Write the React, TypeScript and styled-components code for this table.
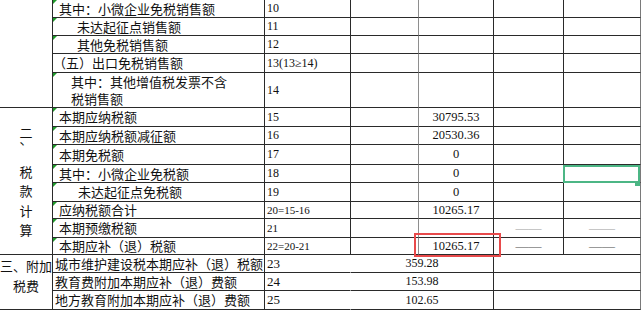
import React from "react";
import styled, { createGlobalStyle, css } from "styled-components";

const GlobalStyle = createGlobalStyle`
  html, body { margin: 0; padding: 0; background: #ffffff; }
  body {
    font-family: "Noto Sans CJK SC", "Noto Sans", sans-serif;
    color: #111111;
  }
`;

const INK = "#2a2a2a";

type Tone = "line" | "soft" | "edge" | "open";

const toneColor = (t?: Tone) =>
  t === "soft" ? "#8e8e8e" : t === "edge" ? "#7a7a7a" : t === "open" ? "transparent" : INK;

const Sheet = styled.div`
  display: grid;
  grid-template-columns: 53px 212px 86px 68px 75px 70px 77px;
  grid-template-rows: 18px 18px 18px 19px 35px 19px 18px 20px 18px 19px 17px 19px 17px 18px 18px 19px;
  width: 641px;
`;

const Cell = styled.div<{ $tone?: Tone; $span?: number }>`
  box-sizing: border-box;
  position: relative;
  display: flex;
  align-items: center;
  min-width: 0;
  border-bottom: 1px solid ${INK};
  border-right: 1px solid ${(p) => toneColor(p.$tone)};
  ${(p) =>
    p.$span &&
    css`
      grid-column: span ${p.$span};
    `}
`;

const SectionCell = styled(Cell)<{ $rows: number; $lift?: number }>`
  grid-row: span ${(p) => p.$rows};
  flex-direction: column;
  justify-content: center;
  font-size: 13px;
  padding-bottom: ${(p) => p.$lift ?? 0}px;
  text-align: center;
  white-space: nowrap;
`;

const VChar = styled.span<{ $mark?: boolean }>`
  display: block;
  height: 19.5px;
  line-height: ${(p) => (p.$mark ? "0" : "19.5px")};
  ${(p) =>
    p.$mark &&
    css`
      margin: -3px 0 3px;
    `}
`;

const HLine = styled.span`
  display: block;
  line-height: 20px;
`;

const ItemCell = styled(Cell)<{ $indent: number; $flag?: boolean }>`
  padding-left: ${(p) => p.$indent}px;
  font-size: 13px;
  line-height: 17.5px;
  white-space: nowrap;
  ${(p) =>
    p.$flag &&
    css`
      &::before {
        content: "";
        position: absolute;
        left: 0;
        top: 0;
        border-top: 4px solid #1f9a2a;
        border-right: 4px solid transparent;
      }
    `}
`;

const ItemText = styled.span`
  display: block;
`;

const LineNoCell = styled(Cell)<{ $size: number }>`
  font-family: "Liberation Serif", serif;
  font-size: ${(p) => p.$size}px;
  padding-left: 2px;
  white-space: nowrap;
`;

const ValueCell = styled(Cell)<{ $size: number; $marked?: boolean }>`
  justify-content: center;
  font-family: "Liberation Serif", serif;
  font-size: ${(p) => p.$size}px;
  ${(p) =>
    p.$marked &&
    css`
      &::after {
        content: "";
        position: absolute;
        left: -5px;
        right: -8px;
        top: -5px;
        bottom: -3px;
        border: 2px solid #e84a4b;
        z-index: 3;
        pointer-events: none;
      }
    `}
`;

const DashCell = styled(Cell)<{ $shade: string }>`
  justify-content: center;
  font-family: "Liberation Serif", serif;
  font-size: 13px;
  color: ${(p) => p.$shade};
`;

const BlankCell = styled(Cell)<{ $selected?: boolean }>`
  ${(p) =>
    p.$selected &&
    css`
      &::after {
        content: "";
        position: absolute;
        left: -1px;
        right: 0;
        top: 0;
        bottom: -1px;
        border: 2px solid #4cb685;
        z-index: 3;
      }
      &::before {
        content: "";
        position: absolute;
        right: 0;
        bottom: -4px;
        width: 5px;
        height: 5px;
        background: #4cb685;
        z-index: 4;
      }
    `}
`;

type UpperRow = { item: string[]; indent: number; flag: boolean; no: string };

const upperRows: UpperRow[] = [
  { item: ["其中：小微企业免税销售额"], indent: 6, flag: true, no: "10" },
  { item: ["未达起征点销售额"], indent: 24, flag: true, no: "11" },
  { item: ["其他免税销售额"], indent: 24, flag: true, no: "12" },
  { item: ["（五）出口免税销售额"], indent: 0, flag: false, no: "13(13≥14)" },
  { item: ["其中：其他增值税发票不含", "税销售额"], indent: 18, flag: true, no: "14" },
];

type TaxRow = {
  item: string;
  indent: number;
  no: string;
  size: number;
  value?: string;
  dash?: string;
  marked?: boolean;
  selected?: boolean;
};

const taxRows: TaxRow[] = [
  { item: "本期应纳税额", indent: 6, no: "15", size: 12, value: "30795.53" },
  { item: "本期应纳税额减征额", indent: 6, no: "16", size: 12, value: "20530.36" },
  { item: "本期免税额", indent: 6, no: "17", size: 12, value: "0" },
  { item: "其中：小微企业免税额", indent: 6, no: "18", size: 12, value: "0", selected: true },
  { item: "未达起征点免税额", indent: 25, no: "19", size: 12, value: "0" },
  { item: "应纳税额合计", indent: 6, no: "20=15-16", size: 11, value: "10265.17" },
  { item: "本期预缴税额", indent: 6, no: "21", size: 11, dash: "#9a9a9a" },
  { item: "本期应补（退）税额", indent: 6, no: "22=20-21", size: 11, value: "10265.17", marked: true, dash: "#4a4a4a" },
];

const surchargeRows = [
  { item: "城市维护建设税本期应补（退）税额", no: "23", value: "359.28" },
  { item: "教育费附加本期应补（退）费额", no: "24", value: "153.98" },
  { item: "地方教育附加本期应补（退）费额", no: "25", value: "102.65" },
];

export default function App() {
  return (
    <>
      <GlobalStyle />
      <Sheet>
        <SectionCell $rows={5} />
        {upperRows.map((r) => (
          <React.Fragment key={r.no}>
            <ItemCell $indent={r.indent} $flag={r.flag}>
              <div>
                {r.item.map((t) => (
                  <ItemText key={t}>{t}</ItemText>
                ))}
              </div>
            </ItemCell>
            <LineNoCell $size={12}>{r.no}</LineNoCell>
            <BlankCell $tone="soft" />
            <BlankCell />
            <BlankCell />
            <BlankCell $tone="edge" />
          </React.Fragment>
        ))}

        <SectionCell $rows={8}>
          <VChar>二</VChar>
          <VChar $mark>、</VChar>
          <VChar>税</VChar>
          <VChar>款</VChar>
          <VChar>计</VChar>
          <VChar>算</VChar>
        </SectionCell>
        {taxRows.map((r) => (
          <React.Fragment key={r.no}>
            <ItemCell $indent={r.indent} $flag>
              {r.item}
            </ItemCell>
            <LineNoCell $size={r.size}>{r.no}</LineNoCell>
            <BlankCell $tone="soft" />
            <ValueCell $size={12.5} $marked={r.marked}>
              {r.value ?? ""}
            </ValueCell>
            {r.dash ? (
              <>
                <DashCell $shade={r.dash}>——</DashCell>
                <DashCell $shade={r.dash} $tone="edge">
                  ——
                </DashCell>
              </>
            ) : (
              <>
                <BlankCell />
                <BlankCell $tone="edge" $selected={r.selected} />
              </>
            )}
          </React.Fragment>
        ))}

        <SectionCell $rows={3} $lift={13}>
          <HLine>三、附加</HLine>
          <HLine>税费</HLine>
        </SectionCell>
        {surchargeRows.map((r) => (
          <React.Fragment key={r.no}>
            <ItemCell $indent={2}>{r.item}</ItemCell>
            <LineNoCell $size={13} $tone="open">
              {r.no}
            </LineNoCell>
            <ValueCell $size={12} $span={2}>
              {r.value}
            </ValueCell>
            <BlankCell $span={2} $tone="edge" />
          </React.Fragment>
        ))}
      </Sheet>
    </>
  );
}
